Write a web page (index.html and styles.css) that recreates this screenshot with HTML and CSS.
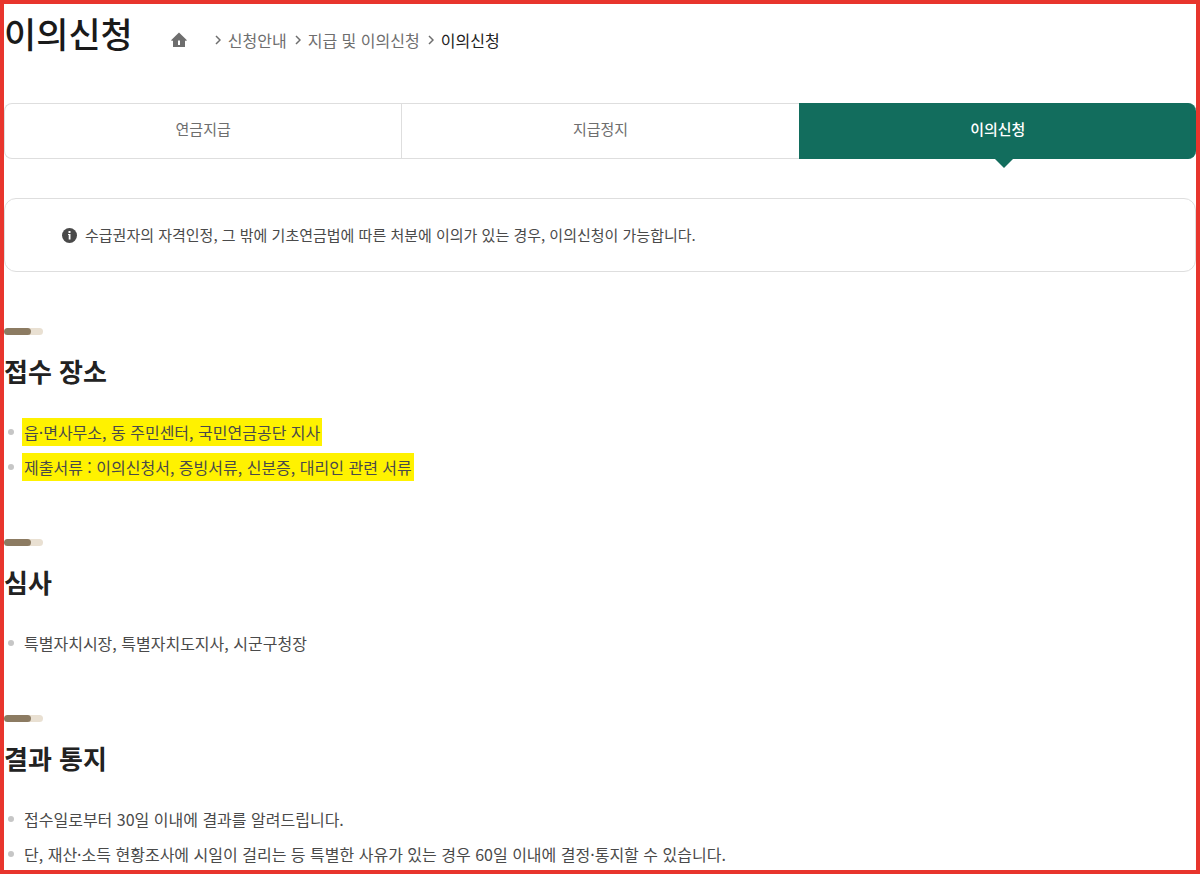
FILE: index.html
```
<!DOCTYPE html>
<html lang="ko">
<head>
    <meta charset="UTF-8">
    <meta name="viewport" content="width=device-width, initial-scale=1.0">
    <title>이의신청</title>
    <link rel="stylesheet" href="styles.css">
</head>
<body>
    <header class="page-header">
        <h1>이의신청</h1>
        <nav class="breadcrumb" aria-label="현재 위치">
            <a href="/" class="home" aria-label="홈">
                <svg width="16" height="16" viewBox="0 0 16 16">
                    <path fill="#6e6e6e" fill-rule="evenodd" d="M8 0.5L0.3 8V8.8H2V15H14V8.8H15.7V8ZM7 8.5H9V13H7Z"/>
                </svg>
            </a>
            <ol>
                <li><svg class="chevron" viewBox="0 0 6 10"><path d="M1 1L5 5L1 9"/></svg><a href="/guide">신청안내</a></li>
                <li><svg class="chevron" viewBox="0 0 6 10"><path d="M1 1L5 5L1 9"/></svg><a href="/guide/payment">지급 및 이의신청</a></li>
                <li><svg class="chevron" viewBox="0 0 6 10"><path d="M1 1L5 5L1 9"/></svg><a href="/guide/appeal" class="current" aria-current="page">이의신청</a></li>
            </ol>
        </nav>
    </header>

    <main>
        <nav class="tabs" aria-label="지급 및 이의신청">
            <a href="/guide/payment">연금지급</a>
            <a href="/guide/stop">지급정지</a>
            <a href="/guide/appeal" class="active" aria-current="page">이의신청</a>
        </nav>

        <div class="notice">
            <svg width="15" height="15" viewBox="0 0 15 15" aria-hidden="true">
                <circle cx="7.5" cy="7.5" r="7.5" fill="#4a4a4a"/>
                <path fill="#fff" d="M6.5 3H8.5V5H6.5ZM6 6H8.5V11.5H6.7V7H6Z"/>
            </svg>
            <p>수급권자의 자격인정, 그 밖에 기초연금법에 따른 처분에 이의가 있는 경우, 이의신청이 가능합니다.</p>
        </div>

        <section>
            <h2>접수 장소</h2>
            <ul>
                <li><mark>읍·면사무소, 동 주민센터, 국민연금공단 지사</mark></li>
                <li><mark>제출서류 : 이의신청서, 증빙서류, 신분증, 대리인 관련 서류</mark></li>
            </ul>
        </section>

        <section>
            <h2>심사</h2>
            <ul>
                <li>특별자치시장, 특별자치도지사, 시군구청장</li>
            </ul>
        </section>

        <section>
            <h2>결과 통지</h2>
            <ul>
                <li>접수일로부터 30일 이내에 결과를 알려드립니다.</li>
                <li>단, 재산·소득 현황조사에 시일이 걸리는 등 특별한 사유가 있는 경우 60일 이내에 결정·통지할 수 있습니다.</li>
            </ul>
        </section>
    </main>
</body>
</html>
```
FILE: styles.css
```
* {
    margin: 0;
    padding: 0;
    box-sizing: border-box;
}

body {
    font-family: 'Noto Sans CJK KR', sans-serif;
    font-size: 16px;
    line-height: 28px;
    min-height: 100vh;
    background: #fff;
    color: #4a4a4a;
    border: 4px solid #e8352d;
}

a {
    color: inherit;
    text-decoration: none;
}

ul, ol {
    list-style: none;
}

.page-header {
    display: flex;
    align-items: center;
    gap: 38px;
}

.page-header h1 {
    font-size: 35px;
    font-weight: 500;
    line-height: 58px;
    color: #1a1a1a;
}

.breadcrumb {
    display: flex;
    align-items: center;
    gap: 28px;
    padding-top: 14px;
    font-size: 16px;
    line-height: 24px;
    color: #6e6e6e;
}

.home svg {
    display: block;
}

.breadcrumb ol {
    display: flex;
    gap: 8px;
}

.breadcrumb li {
    display: flex;
    align-items: center;
    gap: 7px;
}

.chevron {
    width: 6px;
    height: 10px;
    fill: none;
    stroke: #6e6e6e;
    stroke-width: 1.5;
}

.breadcrumb .current {
    color: #222;
}

.tabs {
    display: grid;
    grid-template-columns: repeat(3, 1fr);
    margin-top: 41px;
    font-size: 15px;
    line-height: 50px;
    text-align: center;
    color: #6e6e6e;
}

.tabs a {
    border: 1px solid #dedede;
    border-right: none;
    padding-bottom: 4px;
}

.tabs a:first-child {
    border-radius: 8px 0 0 8px;
}

.tabs a:last-child {
    border-radius: 0 8px 8px 0;
}

.tabs .active {
    position: relative;
    background: #126d5d;
    border-color: #126d5d;
    color: #fff;
    font-weight: 500;
}

/* pointer under the selected tab */
.tabs .active::after {
    content: '';
    position: absolute;
    top: 100%;
    left: 49%;
    border: 10px solid transparent;
    border-top-color: #126d5d;
    border-bottom: none;
}

.notice {
    display: flex;
    align-items: center;
    gap: 8px;
    margin: 39px 0 56px;
    padding: 22px 57px;
    border: 1px solid #dedede;
    border-radius: 12px;
    font-size: 15px;
}

.notice svg {
    flex: none;
}

section + section {
    margin-top: 58px;
}

section::before {
    content: '';
    display: block;
    width: 27px;
    height: 7px;
    border-radius: 4px;
    background: #8c7b62;
    box-shadow: 12px 0 0 #e9e0d2;
}

h2 {
    margin-top: 12px;
    font-size: 26px;
    font-weight: 700;
    line-height: 48px;
    color: #222;
}

section ul {
    display: grid;
    gap: 7px;
    margin-top: 23px;
}

section li {
    display: flex;
    align-items: center;
    gap: 10px;
    padding-left: 4px;
}

section li::before {
    content: '';
    flex: none;
    width: 6px;
    height: 6px;
    border-radius: 50%;
    background: #c6c6c6;
}

mark {
    margin-left: -2px;
    padding: 0 2px;
    background: #fff200;
    color: inherit;
}
```
